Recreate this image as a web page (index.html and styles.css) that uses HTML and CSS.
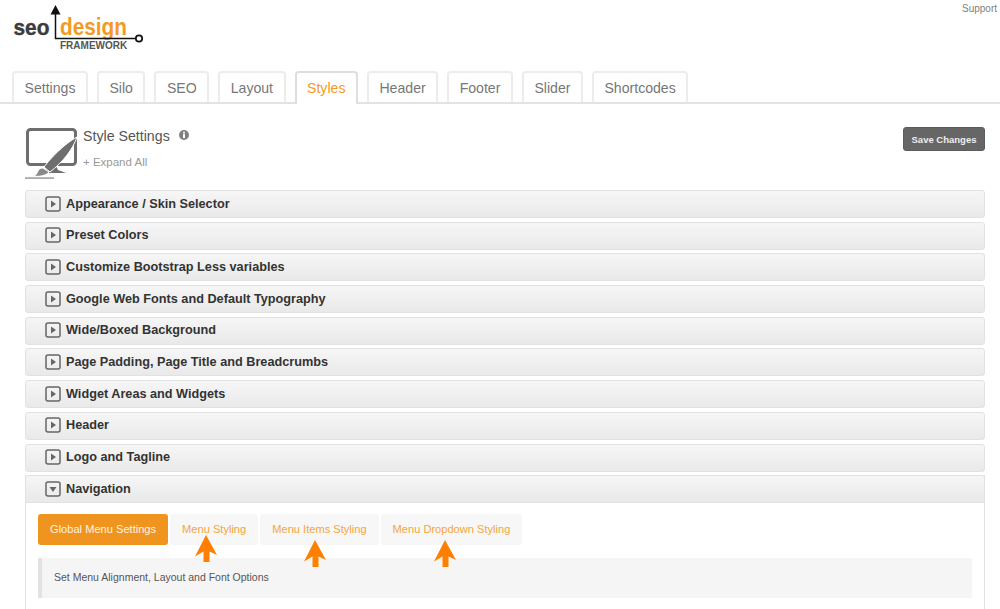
FILE: index.html
```html
<!DOCTYPE html>
<html lang="en">
<head>
<meta charset="utf-8">
<title>Style Settings</title>
<link rel="stylesheet" href="styles.css">
</head>
<body>
<header class="top">
  <svg class="logo" width="150" height="71" viewBox="0 0 150 71">
    <text class="logo-seo" x="13.500" y="34.500" textLength="36" lengthAdjust="spacingAndGlyphs">seo</text>
    <text class="logo-design" x="60" y="35" textLength="67" lengthAdjust="spacingAndGlyphs">design</text>
    <text class="logo-fw" x="60" y="49">FRAMEWORK</text>
    <path d="M55.500 13V38.500H135" fill="none" stroke="#111" stroke-width="1.500"/>
    <path d="M55.500 5L60.500 14.500H50.500z" fill="#111"/>
    <circle cx="139" cy="38.500" r="3.200" fill="#fff" stroke="#111" stroke-width="1.700"/>
  </svg>
  <a class="support">Support</a>
</header>
<nav class="tabs">
  <a class="tab">Settings</a>
  <a class="tab">Silo</a>
  <a class="tab">SEO</a>
  <a class="tab">Layout</a>
  <a class="tab active">Styles</a>
  <a class="tab">Header</a>
  <a class="tab">Footer</a>
  <a class="tab">Slider</a>
  <a class="tab">Shortcodes</a>
</nav>
<main class="content">
  <div class="head">
    <svg class="head-icon" width="54" height="54" viewBox="0 0 54 54">
      <rect x="2.500" y="2.500" width="48" height="35" rx="3" fill="none" stroke="#6e6e6e" stroke-width="3"/>
      <path d="M22 39h9l2 4 8 3H14l7-3z" fill="#6e6e6e"/>
      <path d="M0 52h29v-1.800H0z" fill="#aaa"/>
      <path d="M52 10C46 13 31 24 19 40l6 5C38 35 48 22 52 10z" fill="#6e6e6e" stroke="#fff" stroke-width="1"/>
      <path d="M18 41c-4 0-5 3-6 5-1 2-2 3-4 3 5 1 13 0 16-4z" fill="#8a8a8a" stroke="#fff" stroke-width="1"/>
    </svg>
    <div class="head-text">
      <h1 class="title">Style Settings <svg class="info" width="10" height="10" viewBox="0 0 10 10"><circle cx="5" cy="5" r="5" fill="#808080"/><rect x="4" y="4" width="2" height="4" fill="#fff"/><rect x="4" y="1.800" width="2" height="1.500" fill="#fff"/></svg></h1>
      <a class="expand">+ Expand All</a>
    </div>
    <button class="save">Save Changes</button>
  </div>
  <div class="accordion">
    <div class="row"><svg class="chev" width="16" height="16" viewBox="0 0 16 16"><rect x="1" y="1" width="14" height="14" rx="2" fill="none" stroke="#666" stroke-width="1.500"/><path d="M6 4.500l5 3.500-5 3.500z" fill="#666"/></svg>Appearance / Skin Selector</div>
    <div class="row"><svg class="chev" width="16" height="16" viewBox="0 0 16 16"><rect x="1" y="1" width="14" height="14" rx="2" fill="none" stroke="#666" stroke-width="1.500"/><path d="M6 4.500l5 3.500-5 3.500z" fill="#666"/></svg>Preset Colors</div>
    <div class="row"><svg class="chev" width="16" height="16" viewBox="0 0 16 16"><rect x="1" y="1" width="14" height="14" rx="2" fill="none" stroke="#666" stroke-width="1.500"/><path d="M6 4.500l5 3.500-5 3.500z" fill="#666"/></svg>Customize Bootstrap Less variables</div>
    <div class="row"><svg class="chev" width="16" height="16" viewBox="0 0 16 16"><rect x="1" y="1" width="14" height="14" rx="2" fill="none" stroke="#666" stroke-width="1.500"/><path d="M6 4.500l5 3.500-5 3.500z" fill="#666"/></svg>Google Web Fonts and Default Typography</div>
    <div class="row"><svg class="chev" width="16" height="16" viewBox="0 0 16 16"><rect x="1" y="1" width="14" height="14" rx="2" fill="none" stroke="#666" stroke-width="1.500"/><path d="M6 4.500l5 3.500-5 3.500z" fill="#666"/></svg>Wide/Boxed Background</div>
    <div class="row"><svg class="chev" width="16" height="16" viewBox="0 0 16 16"><rect x="1" y="1" width="14" height="14" rx="2" fill="none" stroke="#666" stroke-width="1.500"/><path d="M6 4.500l5 3.500-5 3.500z" fill="#666"/></svg>Page Padding, Page Title and Breadcrumbs</div>
    <div class="row"><svg class="chev" width="16" height="16" viewBox="0 0 16 16"><rect x="1" y="1" width="14" height="14" rx="2" fill="none" stroke="#666" stroke-width="1.500"/><path d="M6 4.500l5 3.500-5 3.500z" fill="#666"/></svg>Widget Areas and Widgets</div>
    <div class="row"><svg class="chev" width="16" height="16" viewBox="0 0 16 16"><rect x="1" y="1" width="14" height="14" rx="2" fill="none" stroke="#666" stroke-width="1.500"/><path d="M6 4.500l5 3.500-5 3.500z" fill="#666"/></svg>Header</div>
    <div class="row"><svg class="chev" width="16" height="16" viewBox="0 0 16 16"><rect x="1" y="1" width="14" height="14" rx="2" fill="none" stroke="#666" stroke-width="1.500"/><path d="M6 4.500l5 3.500-5 3.500z" fill="#666"/></svg>Logo and Tagline</div>
    <section class="panel">
      <div class="row open"><svg class="chev" width="16" height="16" viewBox="0 0 16 16"><rect x="1" y="1" width="14" height="14" rx="2" fill="none" stroke="#666" stroke-width="1.500"/><path d="M4.500 6l3.500 5 3.500-5z" fill="#666"/></svg>Navigation</div>
      <div class="panel-body">
        <div class="pills">
          <a class="pill on">Global Menu Settings</a>
          <a class="pill">Menu Styling<svg class="arrow arrow-a" width="22" height="28" viewBox="0 0 22 28"><path d="M11 0L22 20l-7.500-3.500V27h-6V16.500L0 21.500z" fill="#ff8000"/></svg></a>
          <a class="pill">Menu Items Styling<svg class="arrow arrow-b" width="22" height="28" viewBox="0 0 22 28"><path d="M11 0L22 20l-7.500-3.500V27h-6V16.500L0 21.500z" fill="#ff8000"/></svg></a>
          <a class="pill">Menu Dropdown Styling<svg class="arrow arrow-c" width="22" height="28" viewBox="0 0 22 28"><path d="M11 0L22 20l-7.500-3.500V27h-6V16.500L0 21.500z" fill="#ff8000"/></svg></a>
        </div>
        <p class="note">Set Menu Alignment, Layout and Font Options</p>
      </div>
    </section>
  </div>
</main>
</body>
</html>
```
FILE: styles.css
```css
* { box-sizing: border-box; }
html, body { margin: 0; height: 609px; overflow: hidden; background: #fff; }
body { font-family: "Liberation Sans", Arial, sans-serif; color: #333; }

.top { display: flex; justify-content: space-between; height: 71px; }
.logo { display: block; }
.logo-seo { font: bold 22.500px "Liberation Sans", sans-serif; fill: #3c3c3c; stroke: #3c3c3c; stroke-width: 0.400px; }
.logo-design { font: bold 23px "Liberation Sans", sans-serif; fill: #f39a1f; }
.logo-fw { font: bold 10px "Liberation Sans", sans-serif; fill: #555; }
.support { font-size: 10px; color: #808080; padding: 3px 3px 0 0; }

.tabs { display: flex; gap: 9px; height: 33px; padding-left: 12px; border-bottom: 2px solid #e2e2e2; }
.tab {
  height: 31px; padding: 6px 10.500px 0; font-size: 14.100px; line-height: 18px; color: #777;
  border: 2px solid #ececec; border-bottom: 0; border-radius: 4px 4px 0 0; background: #fff;
}
.tab.active { color: #f39a1f; border-color: #dedede; height: 33px; }

.content { padding: 0 15px 0 25px; }
.head { display: flex; align-items: flex-start; height: 86px; padding-top: 23px; }
.head-icon { display: block; margin-right: 4px; flex: none; }
.head-text { flex: 1; }
.title { margin: 0; font-size: 14.200px; line-height: 18px; font-weight: normal; color: #555; }
.info { margin-left: 5px; vertical-align: 1px; }
.expand { display: block; margin-top: 10px; font-size: 11.500px; line-height: 14px; color: #999; }
.save {
  width: 82px; height: 24px; padding: 0; font: bold 9.500px "Liberation Sans", sans-serif; color: #eee;
  background: #666; border: 1px solid #5c5c5c; border-radius: 3px;
}

.accordion { display: flex; flex-direction: column; gap: 3.700px; }
.row {
  display: flex; align-items: center; gap: 5px; height: 28px; padding: 0 0 1px 19px;
  font-size: 12.700px; font-weight: bold; color: #333;
  background: linear-gradient(#f6f6f6, #e9e9e9);
  border: 1px solid #e2e2e2; border-radius: 3px;
}
.chev { flex: none; }
.panel { border: 1px solid #e2e2e2; border-top: 0; border-bottom: 0; height: 140px; }
.row.open { margin: 0 -1px; border-radius: 3px 3px 0 0; }
.panel-body { padding: 11px 12px 0; }
.pills { display: flex; gap: 2px; }
.pill {
  position: relative; height: 31px; padding: 0 12px; font-size: 11.100px; line-height: 31px;
  color: #f5a540; background: #f7f7f7; border-radius: 3px;
}
.pill.on { color: #fff3e0; background: #ef951f; }
.arrow { position: absolute; }
.arrow-a { left: 25px; top: 21px; }
.arrow-b { left: 44px; top: 26px; }
.arrow-c { left: 53px; top: 26px; }
.note {
  margin: 13px 0 0; height: 40px; padding-left: 12px; font-size: 10.500px; line-height: 38px; color: #555;
  background: #f5f5f5; border-left: 4px solid #e2e2e2;
}
```
